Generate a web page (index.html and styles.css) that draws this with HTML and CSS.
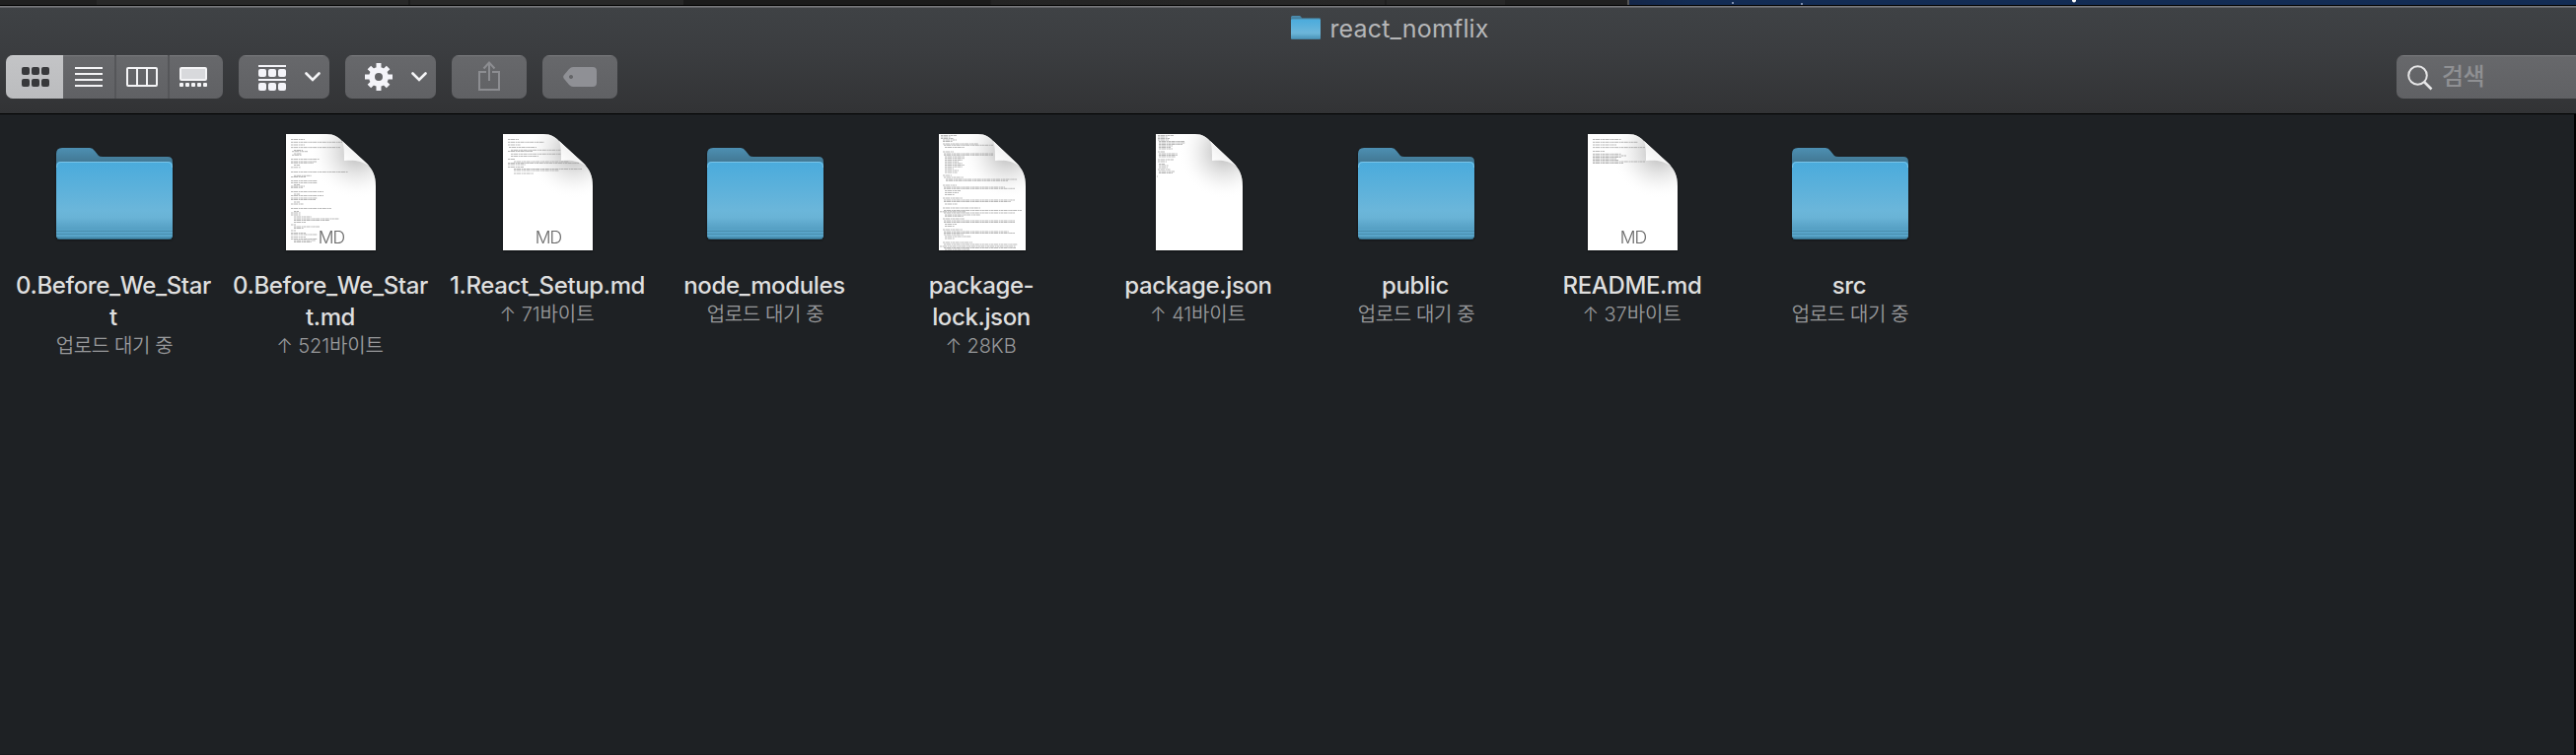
FILE: index.html
```html
<!DOCTYPE html>
<html lang="ko">
<head>
<meta charset="utf-8">
<title>react_nomflix</title>
<link rel="stylesheet" href="styles.css">
</head>
<body>
<svg class="defs" width="0" height="0" aria-hidden="true">
  <defs>
    <linearGradient id="back" x1="0" y1="0" x2="0" y2="1"><stop offset="0" stop-color="#4d8fb2"/><stop offset="1" stop-color="#39667c"/></linearGradient>
    <linearGradient id="front" x1="0" y1="0" x2="0" y2="1"><stop offset="0" stop-color="#4aabdc"/><stop offset=".63" stop-color="#6bb6da"/><stop offset=".72" stop-color="#69b3d6"/><stop offset=".86" stop-color="#57a1c5"/><stop offset="1" stop-color="#5aa8cd"/></linearGradient>
    <linearGradient id="curl" gradientUnits="userSpaceOnUse" x1="58" y1="28" x2="74" y2="12"><stop offset="0" stop-color="#fff"/><stop offset=".55" stop-color="#f4f4f4"/><stop offset="1" stop-color="#fff"/></linearGradient>
    <radialGradient id="shade" gradientUnits="userSpaceOnUse" cx="72" cy="18" r="48"><stop offset="0" stop-color="#b4b4b4"/><stop offset=".3" stop-color="#d2d2d2" stop-opacity=".9"/><stop offset=".62" stop-color="#eaeaea" stop-opacity=".65"/><stop offset="1" stop-color="#fff" stop-opacity="0"/></radialGradient>
    <symbol id="folder" viewBox="0 0 118 118">
      <path d="M0 32V20Q0 14 6 14H34Q37 14 39 17L43 22Q44 23 47 23H113Q118 23 118 28V40H0Z" fill="url(#back)"/>
      <rect y="28" width="118" height="78.500" rx="4" fill="url(#front)"/>
      <path d="M.5 34Q.5 28.500 5 28.500H113Q117.500 28.500 117.500 34" fill="none" stroke="#79c4e8"/>
      <path d="M0 98.500H118M0 101.500H118M0 104.500H118" stroke="#4689a9" stroke-opacity=".8"/>
      <path d="M1 106H117" stroke="#357898"/>
    </symbol>
    <symbol id="sheet" viewBox="0 0 91 118">
      <path d="M0 0H41C49 0 53 3 59 9L81 29C88 36 91 42 91 53V118H0Z" fill="#fff"/>
      <path d="M0 0H41C49 0 53 3 59 9L81 29C88 36 91 42 91 53V118H0Z" fill="url(#shade)"/>
    </symbol>
    <symbol id="fold" viewBox="0 0 91 118"><path d="M57 7C59 12 59 19 59 27C69 26 76 27 84 32Z" fill="url(#curl)"/></symbol>
  </defs>
</svg>

<div class="backdrop"><span class="tab tab-a"></span><span class="tab tab-b"></span><span class="tab tab-c"></span><span class="tab tab-d"></span><span class="tab tab-e"></span><span class="tab tab-f"></span>
  <svg class="sky" width="960" height="5"><g fill="#7d8eae"><rect x="104" y="2" width="2" height="2"/><rect x="174" y="3" width="2" height="2"/></g><circle cx="451" cy=".5" r="2" fill="#fff"/></svg>
</div>
<header class="toolbar">
  <div class="titlebar"><svg class="title-icon" width="30" height="24" viewBox="0 14 118 93" preserveAspectRatio="none"><use href="#folder" width="118" height="118"/></svg><span class="title">react_nomflix</span></div>
  <div class="controls">
    <div class="segments">
      <button class="seg seg-on"><svg width="28" height="20" fill="#38393b"><rect width="8" height="8" rx="2"/><rect x="10" width="8" height="8" rx="2"/><rect x="20" width="8" height="8" rx="2"/><rect y="12" width="8" height="8" rx="2"/><rect x="10" y="12" width="8" height="8" rx="2"/><rect x="20" y="12" width="8" height="8" rx="2"/></svg></button>
      <button class="seg seg-list"><svg width="28" height="20"><path d="M0 1H28M0 7H28M0 13H28M0 19H28" stroke="#f4f4f6" stroke-width="2"/></svg></button>
      <button class="seg seg-cols"><svg width="32" height="20"><rect x="1" y="1" width="30" height="18" rx="1" fill="none" stroke="#f4f4f6" stroke-width="2"/><path d="M11 1V19M21 1V19" stroke="#f4f4f6" stroke-width="2"/></svg></button>
      <button class="seg seg-gallery"><svg width="28" height="20" fill="#f4f4f6"><rect x="1" y="1" width="26" height="12" rx="1" fill="#d8d9dc" stroke="#f4f4f6" stroke-width="2"/><rect y="16" width="4" height="4" rx="1"/><rect x="6" y="16" width="4" height="4" rx="1"/><rect x="12" y="16" width="4" height="4" rx="1"/><rect x="18" y="16" width="4" height="4" rx="1"/><rect x="24" y="16" width="4" height="4" rx="1"/></svg></button>
    </div>
    <button class="btn btn-menu"><svg width="28" height="26" fill="#f4f4f9"><path d="M0 0H28V2H0ZM0 14H28V16H0Z"/><rect y="4" width="8" height="8" rx="2"/><rect x="10" y="4" width="8" height="8" rx="2"/><rect x="20" y="4" width="8" height="8" rx="2"/><rect y="18" width="8" height="8" rx="2"/><rect x="10" y="18" width="8" height="8" rx="2"/><rect x="20" y="18" width="8" height="8" rx="2"/></svg><svg class="chev" width="16" height="10"><path d="M1.500 1.500L8 8L14.500 1.500" fill="none" stroke="#f4f4f6" stroke-width="2.600" stroke-linecap="round"/></svg></button>
    <button class="btn btn-menu btn-gear"><svg width="28" height="28" viewBox="-14 -14 28 28"><circle r="7" fill="none" stroke="#f4f4f9" stroke-width="6"/><path d="M0-14V-8M0 14V8M-14 0H-8M14 0H8M-9.600-9.600L-6-6M9.600 9.600L6 6M-9.600 9.600L-6 6M9.600-9.600L6-6" stroke="#f4f4f9" stroke-width="5"/></svg><svg class="chev" width="16" height="10"><path d="M1.500 1.500L8 8L14.500 1.500" fill="none" stroke="#f4f4f6" stroke-width="2.600" stroke-linecap="round"/></svg></button>
    <button class="btn btn-share"><svg width="22" height="30" fill="none" stroke="#8c8d91" stroke-width="2"><path d="M8 11H1V29H21V11H14M11 20V1.500M5.500 7.500L11 1.500L16.500 7.500"/></svg></button>
    <button class="btn btn-tag"><svg width="34" height="20"><path fill="#8f9095" fill-rule="evenodd" d="M10 0H30Q34 0 34 4V16Q34 20 30 20H10Q8 20 6 18L1 12Q-.7 10 1 8L6 2Q8 0 10 0ZM8 8a2 2 0 1 0 .01 0Z"/></svg></button>
    <div class="search"><svg width="26" height="26" fill="none" stroke="#e6e6e7"><circle cx="10.500" cy="10.500" r="9.300" stroke-width="2"/><path d="M17 17L24.500 24.500" stroke-width="2.600"/></svg><span>검색</span></div>
  </div>
</header>

<main class="files">
  <div class="file"><svg class="icon" width="118" height="118"><use href="#folder" width="118" height="118"/></svg><div class="name">0.Before_We_Star<br>t</div><div class="status waiting">업로드 대기 중</div></div>
  <div class="file"><svg class="icon icon-md" width="91" height="118"><use href="#sheet"/><path class="code" d="M5 5.500h14M5 8.300h52M5 11h14M5 13.600h50M8 16.500h9M6 17.700h16M8 20h8M6 21.300h10M5 25.500h29M5 28h26M5 29.300h23M8 31.500h6M5 33.800h10M5 38.500h58M8 42.300h18M5 43.500h15M5 47.500h27M5 49.500h27M8 51.500h6M5 53h14M5 54.300h12M5 58.500h33M8 61h6M5 62.500h33M5 65h27M5 66.500h25M8 69h6M5 71h13M5 75.500h41M8 78.500h5M5 80h10M5 82h10M8 84h18M8 86h46M8 87.500h36M8 89.500h12M5 92h5M8 94h26M8 95.500h10M5 98h5M5 100.500h15M5 102h27M5 104.500h15M5 106.500h27M8 108h22M8 109.500h18"/><use href="#fold"/><text class="kind" x="46" y="111">MD</text></svg><div class="name">0.Before_We_Star<br>t.md</div><div class="status">↑ 521바이트</div></div>
  <div class="file"><svg class="icon icon-md" width="91" height="118"><use href="#sheet"/><path class="code" d="M5 5.500h11M5 8.300h37M5 11h13M6 13.500h28M8 16.300h51M5 17.500h25M8 20.300h51M8 22.500h28M5 25.500h7M11 28h56M5 29.500h72M5 31h18M5 33.500h16M11 35.500h69M11 37h46M11 40h20"/><use href="#fold"/><text class="kind" x="46" y="111">MD</text></svg><div class="name">1.React_Setup.md</div><div class="status">↑ 71바이트</div></div>
  <div class="file"><svg class="icon" width="118" height="118"><use href="#folder" width="118" height="118"/></svg><div class="name">node_modules</div><div class="status waiting">업로드 대기 중</div></div>
  <div class="file"><svg class="icon" width="88" height="118"><svg width="88" height="118" viewBox="0 0 91 118" preserveAspectRatio="none"><use href="#sheet" width="91" height="118"/></svg><path class="code" d="M2 1.500h16M2 3h10M2 4.500h13M4 6h14M4 7.500h10M4 10h36M5 11.300h50M6 13.500h20M4 18h11M5 20h50M5 21.300h50M6 23h20M6 24.700h20M6 26.400h18M6 28.100h14M6 29.800h18M6 31.500h20M6 33.200h18M6 35h9M6 37h14M6 39h13M4 42h9M5 44h20M7 46h72M7 47.300h63M4 52h14M5 54h62M5 55.300h72M6 57.500h16M6 59.500h14M6 61.500h10M4 65h20M5 67h72M5 68.500h68M6 71h13M4 75h38M5 77.500h79M1 78.800h26M5 80h72M6 82h36M6 83.300h19M4 86h22M5 88h72M5 89.500h72M6 91.500h12M6 93.500h10M4 97h20M5 99h66M5 100.500h72M5 102h20M6 104h27M6 106h10M4 110h30M5 112h75M1 114h77M5 115.500h73M6 117h25"/><svg width="88" height="118" viewBox="0 0 91 118" preserveAspectRatio="none"><use href="#fold" width="91" height="118"/></svg></svg><div class="name">package-<br>lock.json</div><div class="status">↑ 28KB</div></div>
  <div class="file"><svg class="icon" width="88" height="118"><svg width="88" height="118" viewBox="0 0 91 118" preserveAspectRatio="none"><use href="#sheet" width="91" height="118"/></svg><path class="code" d="M2 1.500h16M2 3h10M2 4.500h12M2 6h11M3 7.500h26M3 9h27M3 10.500h24M3 12h14M3 13.500h12M3 15h14M2 18h7M3 20h19M3 21.500h19M3 23h17M2 26h16M2 28h9M3 30.500h6M3 32h10M3 34h9M2 36h13M3 38h16M3 39.500h14M1 43h1"/><svg width="88" height="118" viewBox="0 0 91 118" preserveAspectRatio="none"><use href="#fold" width="91" height="118"/></svg></svg><div class="name">package.json</div><div class="status">↑ 41바이트</div></div>
  <div class="file"><svg class="icon" width="118" height="118"><use href="#folder" width="118" height="118"/></svg><div class="name">public</div><div class="status waiting">업로드 대기 중</div></div>
  <div class="file"><svg class="icon icon-md" width="91" height="118"><use href="#sheet"/><path class="code" d="M5 5.500h29M5 8.300h46M5 11h24M5 13.600h53M5 17.500h12M5 20.300h29M5 22h34M5 23.500h29M5 25h24M5 26.500h26M5 28h53M5 29.500h31"/><use href="#fold"/><text class="kind" x="46" y="111">MD</text></svg><div class="name">README.md</div><div class="status">↑ 37바이트</div></div>
  <div class="file"><svg class="icon" width="118" height="118"><use href="#folder" width="118" height="118"/></svg><div class="name">src</div><div class="status waiting">업로드 대기 중</div></div>
</main>
</body>
</html>
```

FILE: styles.css
```css
* { box-sizing: border-box; }
body {
  margin: 0;
  width: 2612px;
  height: 766px;
  overflow: hidden;
  display: flex;
  flex-direction: column;
  background: #1e2124;
  font-family: Inter, "Noto Sans CJK KR", sans-serif;
}
.defs { position: absolute; }
.backdrop { display: flex; height: 5px; flex: none; }
.tab { background: #282828; }
.tab-a { width: 98px; background: #202020; }
.tab-b { width: 318px; border-right: 2px solid #1d1d1d; }
.tab-c { width: 277px; }
.tab-d { width: 713px; background: linear-gradient(90deg, #1b1b1b 311px, #242424 312px, #282828); border-right: 2px solid #202020; }
.tab-e { width: 120px; }
.tab-f { width: 126px; background: #202020; border-right: 2px solid #555; }
.sky { display: block; background: linear-gradient(90deg, #142648, #132c54 60px, #132c54); }

.toolbar {
  flex: none;
  height: 111px;
  border-top: 1px solid #000;
  border-bottom: 1px solid #000;
  background: linear-gradient(#77787b 0 1px, #626367 1px 2px, #3f4245 2px, #3b3d40 45px, #323335 109px);
}
.titlebar { height: 50px; display: flex; justify-content: center; padding-left: 207px; padding-top: 9px; gap: 9px; }
.title-icon { margin-top: 1px; }
.title { color: #b5b6b8; font-size: 25px; line-height: 28px; letter-spacing: .15px; }
.controls { display: flex; padding-left: 6px; gap: 16px; height: 44px; }
button { border: 0; padding: 0; margin: 0; display: flex; align-items: center; }
.segments, .btn, .search {
  height: 44px;
  border-radius: 7px;
  background: linear-gradient(#7b7c7f 0 1px, #67686b 1px, #606164);
  overflow: hidden;
}
.segments { display: flex; width: 220px; }
.seg { background: none; height: 44px; justify-content: center; }
.seg-on { width: 58px; background: linear-gradient(#d3d4d6 0 1px, #c3c4c6 1px, #bbbcbe); padding-left: 2px; }
.seg-list { width: 54px; border-right: 2px solid #555659; }
.seg-cols { width: 54px; border-right: 2px solid #555659; }
.seg-gallery { width: 54px; padding-right: 6px; }
.btn-menu { width: 92px; padding-left: 20px; padding-top: 2px; gap: 19px; }
.btn-menu .chev { margin-top: -2px; }
.btn-gear { padding-top: 0; }
.btn-gear .chev { margin-top: 0; }
.btn-share, .btn-tag { width: 76px; justify-content: center; }
.btn-share { padding-bottom: 2px; }
.search { margin-left: auto; width: 182px; border-radius: 7px 0 0 7px; display: flex; align-items: center; padding-left: 11px; gap: 9px; padding-top: 2px; }
.search span { font-size: 24px; font-weight: 500; line-height: 36px; color: #8f9093; letter-spacing: -.5px; padding-bottom: 2px; }

.files {
  flex: 1;
  display: grid;
  grid-template-columns: repeat(9, 220px);
  align-items: start;
  padding: 20px 0 0 6px;
  border-right: 2px solid #000;
  border-bottom: 1px solid #191b1e;
}
.file { display: flex; flex-direction: column; align-items: center; text-align: center; }
.icon { display: block; filter: drop-shadow(0 1px 1px #0007); }
.icon-md { margin-right: 1px; }
.name { margin-top: 20px; padding-right: 2px; font-size: 24px; font-weight: 500; line-height: 32px; color: #dfdfdf; letter-spacing: -.37px; white-space: nowrap; }
.status { padding-right: 3px; font-size: 20px; line-height: 26px; color: #98999b; letter-spacing: -.1px; white-space: nowrap; font-weight: 350; }
.waiting { padding-right: 0; letter-spacing: -.4px; }
.code { fill: none; stroke: #999; stroke-width: .7; stroke-dasharray: 2.500 .5 4 .7 1.500 .4; }
.kind { font-size: 17.500px; font-weight: 300; fill: #666; text-anchor: middle; letter-spacing: -.8px; }
```
